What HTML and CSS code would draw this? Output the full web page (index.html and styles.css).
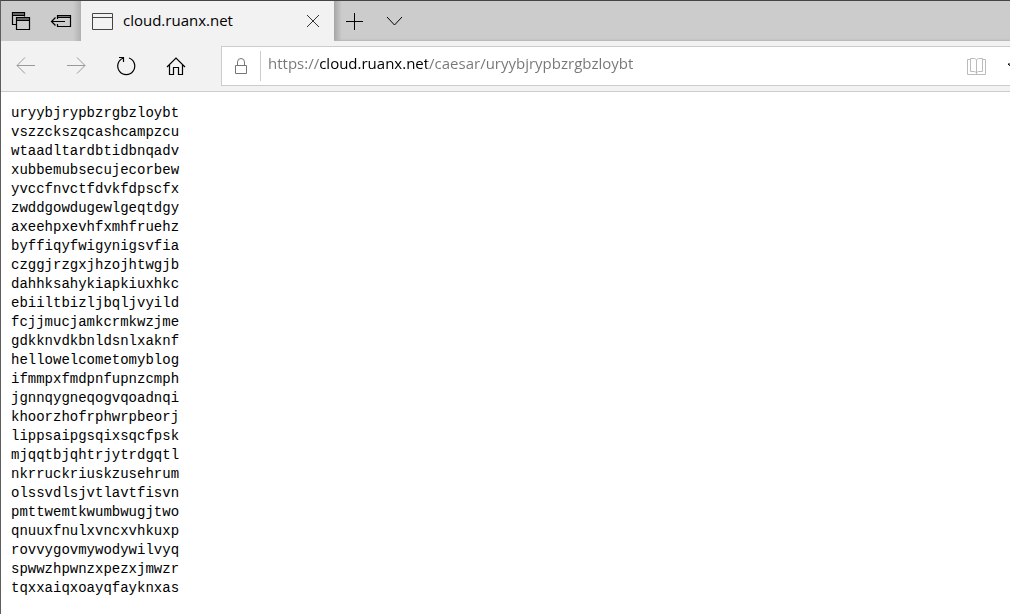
FILE: index.html
```html
<!DOCTYPE html>
<html lang="en">
<head>
    <meta charset="UTF-8">
    <meta name="viewport" content="width=device-width, initial-scale=1.0">
    <title>cloud.ruanx.net</title>
    <link rel="stylesheet" href="styles.css">
</head>
<body>
    <div class="browser">
        <header class="tab-bar">
            <div class="tab-tools">
                <button type="button" class="tool" aria-label="Tabs you've set aside">
                    <svg width="20" height="20" viewBox="0 0 20 20">
                        <path d="M5.500 13.500h-4v-12h12v4M2 4.500h11" stroke-width="1.200"/>
                        <path d="M2 3h11M6 8h12" stroke="#666" stroke-width="2"/>
                        <path d="M5.500 6.500h13v12h-13zM6 9.500h12" stroke-width="1.200"/>
                    </svg>
                </button>
                <button type="button" class="tool" aria-label="Set these tabs aside">
                    <svg width="22" height="20" viewBox="0 0 22 20">
                        <path d="M8 5h12" stroke="#777" stroke-width="2"/>
                        <path d="M7.500 8V4.500h13v11h-13V13M8 6.500h12" stroke-width="1.200"/>
                        <path d="M15 10.500H1.500M5.500 6.500l-4 4 4 4" stroke-width="1.200"/>
                    </svg>
                </button>
            </div>
            <div class="tab">
                <svg class="tab-icon" width="21" height="17" viewBox="0 0 21 17">
                    <path d="M.5.5h20v16H.5zM1 4.500h19"/>
                </svg>
                <span class="tab-title">cloud.ruanx.net</span>
                <button type="button" class="tab-close" aria-label="Close tab">
                    <svg width="14" height="14" viewBox="0 0 14 14">
                        <path d="M1 1l12 12M13 1L1 13"/>
                    </svg>
                </button>
            </div>
            <div class="tab-actions">
                <button type="button" class="tool" aria-label="New tab">
                    <svg width="17" height="17" viewBox="0 0 17 17">
                        <path d="M8.500 0v17M0 8.500h17"/>
                    </svg>
                </button>
                <button type="button" class="tool" aria-label="Show tab previews">
                    <svg width="17" height="17" viewBox="0 0 17 17">
                        <path d="M1 4l7.500 8L16 4"/>
                    </svg>
                </button>
            </div>
        </header>

        <nav class="toolbar">
            <div class="nav-buttons">
                <button type="button" class="nav-button disabled" aria-label="Back" disabled>
                    <svg width="20" height="20" viewBox="0 0 20 20">
                        <path d="M19 9.500H1M9 1.500l-8 8 8 8"/>
                    </svg>
                </button>
                <button type="button" class="nav-button disabled" aria-label="Forward" disabled>
                    <svg width="20" height="20" viewBox="0 0 20 20">
                        <path d="M1 9.500h18M11 1.500l8 8-8 8"/>
                    </svg>
                </button>
                <button type="button" class="nav-button" aria-label="Refresh">
                    <svg width="20" height="20" viewBox="0 0 20 20">
                        <path d="M13 2A8.500 8.500 0 1 1 7.500 2L7 2.200M3 1.500h4.500V6" stroke-width="1.200"/>
                    </svg>
                </button>
                <button type="button" class="nav-button" aria-label="Home">
                    <svg width="20" height="20" viewBox="0 0 20 20">
                        <path d="M1 11l9-9 9 9M3.500 9v9.500h4v-7h5v7h4V9" stroke-width="1.200"/>
                    </svg>
                </button>
            </div>
            <div class="address-bar">
                <svg class="lock" width="14" height="18" viewBox="0 0 14 18">
                    <path d="M1.500 8.500h11v8h-11zM3.500 8.500V5a3.500 3.500 0 0 1 7 0v3.500"/>
                </svg>
                <input type="text" class="address" aria-label="Address" value="https://cloud.ruanx.net/caesar/uryybjrypbzrgbzloybt" spellcheck="false">
                <button type="button" class="address-button" aria-label="Reading view" disabled>
                    <svg width="20" height="20" viewBox="0 0 20 20">
                        <path d="M3.500 3.500H.5v15h18v-15h-3M9.500 4v14M3.500 2.500h4l2 1 2-1h4v13h-4l-2 1-2-1h-4z"/>
                    </svg>
                </button>
                <button type="button" class="address-button" aria-label="Add to favorites">
                    <svg width="20" height="20" viewBox="0 0 20 20">
                        <path d="M10 1l2.800 7H19l-5 4.500 2 6-6-4-6 4 2-6L1 8h6.200z"/>
                    </svg>
                </button>
            </div>
        </nav>

        <main class="page">
<pre class="output">uryybjrypbzrgbzloybt
vszzckszqcashcampzcu
wtaadltardbtidbnqadv
xubbemubsecujecorbew
yvccfnvctfdvkfdpscfx
zwddgowdugewlgeqtdgy
axeehpxevhfxmhfruehz
byffiqyfwigynigsvfia
czggjrzgxjhzojhtwgjb
dahhksahykiapkiuxhkc
ebiiltbizljbqljvyild
fcjjmucjamkcrmkwzjme
gdkknvdkbnldsnlxaknf
hellowelcometomyblog
ifmmpxfmdpnfupnzcmph
jgnnqygneqogvqoadnqi
khoorzhofrphwrpbeorj
lippsaipgsqixsqcfpsk
mjqqtbjqhtrjytrdgqtl
nkrruckriuskzusehrum
olssvdlsjvtlavtfisvn
pmttwemtkwumbwugjtwo
qnuuxfnulxvncxvhkuxp
rovvygovmywodywilvyq
spwwzhpwnzxpezxjmwzr
tqxxaiqxoayqfayknxas</pre>
        </main>
    </div>
</body>
</html>
```
FILE: styles.css
```css
* {
    box-sizing: border-box;
}

body {
    margin: 0;
    background: #fff;
    color: #000;
    font-family: "Open Sans", "Noto Sans", sans-serif;
    font-size: 15px;
    overflow: hidden;
}

.browser {
    min-height: 100vh;
    border-top: 1px solid #454345;
    border-left: 1px solid #5f5d5f;
}

button {
    display: flex;
    align-items: center;
    justify-content: center;
    flex-shrink: 0;
    padding: 0;
    border: none;
    background: none;
    color: inherit;
}

svg {
    display: block;
    flex-shrink: 0;
    fill: none;
    stroke: currentColor;
}

.tab-bar {
    display: flex;
    height: 40px;
    background: #ccc;
}

.tab-tools {
    display: flex;
    width: 80px;
    background: linear-gradient(to right, transparent 72px, #b0b0b0);
}

.tool {
    width: 40px;
    height: 40px;
}

.tab {
    display: flex;
    align-items: center;
    width: 253px;
    padding: 0 12px 0 11px;
    background: #f2f2f2;
}

.tab-icon {
    color: #444;
}

.tab-title {
    flex: 1;
    padding: 0 0 2px 10px;
}

.tab-close {
    width: 18px;
    height: 40px;
    color: #333;
}

.tab-actions {
    display: flex;
    flex: 1;
    background: linear-gradient(to right, #a5a5a5, transparent 8px);
    box-shadow: inset 0 -2px 2px -1px #b5b5b5;
}

.toolbar {
    display: flex;
    align-items: center;
    height: 51px;
    background: #f2f2f2;
    border-bottom: 1px solid #ccc;
}

.nav-buttons {
    display: flex;
    width: 220px;
}

.nav-button {
    width: 50px;
    height: 50px;
}

.disabled {
    color: #999;
}

/* the bar runs on past the right edge of the window */
.address-bar {
    display: flex;
    align-items: center;
    flex: 1;
    height: 40px;
    margin-right: -28px;
    padding-left: 12px;
    background: #fff;
    border: 1px solid #ccc;
}

.lock {
    color: #767676;
}

/* the host part of the address is darker than the rest */
.address {
    flex: 1;
    min-width: 0;
    height: 30px;
    margin-left: 12px;
    padding: 0 0 6px 7px;
    border: none;
    border-left: 1px solid #ccc;
    outline: none;
    font: inherit;
    color: transparent;
    background: linear-gradient(to right, #767676 59px, #000 59px, #000 166px, #767676 166px);
    -webkit-background-clip: text;
    background-clip: text;
}

.address-button {
    width: 40px;
    height: 38px;
}

.address-button:disabled {
    color: #bbb;
}

.page {
    padding: 12px 10px;
}

.output {
    margin: 0;
    font-family: "Liberation Mono", monospace;
    font-size: 14px;
    line-height: 19px;
}
```
